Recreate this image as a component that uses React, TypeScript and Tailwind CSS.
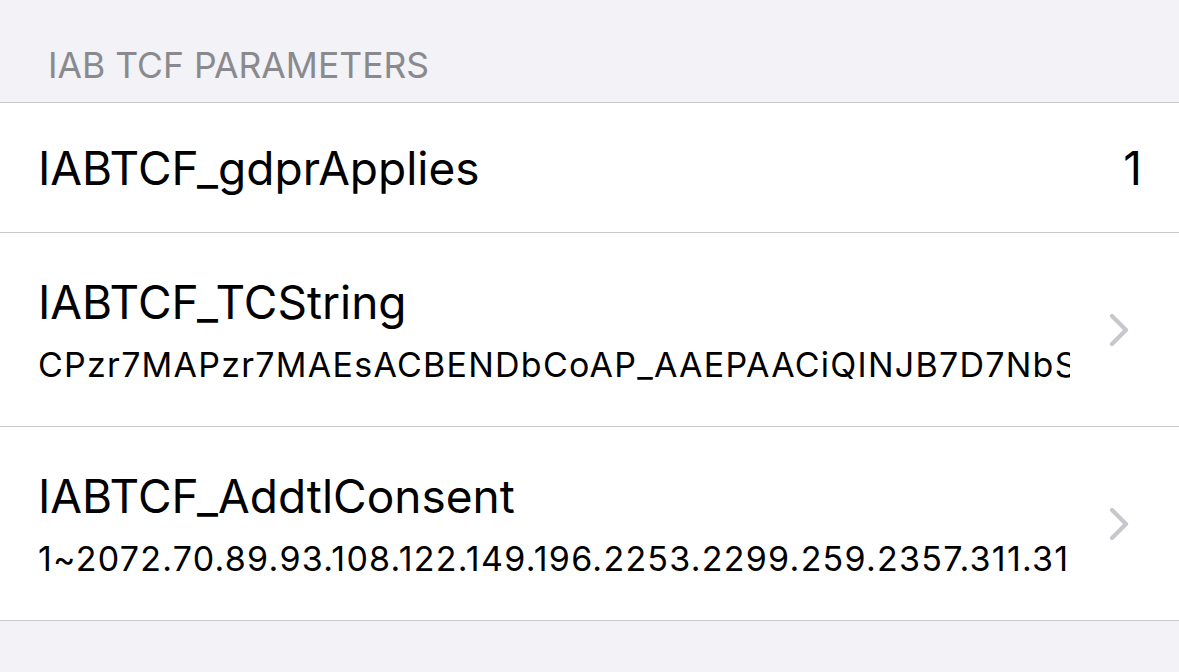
import React from "react";

interface Param {
	key: string;
	value: string;
	detail?: boolean;
}

const params: Param[] = [
	{ key: "IABTCF_gdprApplies", value: "1" },
	{
		key: "IABTCF_TCString",
		value: "CPzr7MAPzr7MAEsACBENDbCoAP_AAEPAACiQINJB7D7NbSFyWfZhF90_aNEHI1XNqw3rZvjdYSVGpz2lBLbwLmjgf8uWW9",
		detail: true,
	},
	{
		key: "IABTCF_AddtlConsent",
		value: "1~2072.70.89.93.108.122.149.196.2253.2299.259.2357.311.317.323.2373.338.358.415.440.449",
		detail: true,
	},
];

function Chevron() {
	return (
		<svg width="20" height="32" viewBox="0 0 20 32" className="shrink-0">
			<path d="M3 2 L17 16 L3 30" fill="none" stroke="#c7c7cc" strokeWidth="4.2" strokeLinecap="round" strokeLinejoin="round" />
		</svg>
	);
}

export default function App() {
	return (
		<div className="w-[1179px] h-[672px] bg-[#f2f2f7] font-['Inter','Liberation_Sans',sans-serif] overflow-hidden">
			{/* section header */}
			<div className="h-[102px] flex items-end pl-[48px] pb-[19px]">
				<span className="text-[35.5px] leading-none text-[#8a8a8e]">IAB TCF PARAMETERS</span>
			</div>

			<div className="bg-white border-t border-b border-[#c8c7cc]">
				{params.map((p, i) =>
					p.detail ? (
						<div
							key={p.key}
							className={`flex items-center pl-[38px] pr-[50px] ${i < params.length - 1 ? "h-[194px] border-b border-[#c8c7cc]" : "h-[193px]"}`}
						>
							<div className="w-[1032px] shrink-0">
								<div className="text-[46px] leading-[1.1] text-black whitespace-nowrap">{p.key}</div>
								<div className="mt-[20px] w-full text-[34px] leading-none tracking-[1.25px] text-black whitespace-nowrap overflow-hidden">{p.value}</div>
							</div>
							<div className="flex-1" />
							<Chevron />
						</div>
					) : (
						<div key={p.key} className="h-[130px] flex items-center justify-between pl-[38px] pr-[37px] border-b border-[#c8c7cc]">
							<span className="text-[46px] leading-none text-black">{p.key}</span>
							<span className="text-[46px] leading-none text-black">{p.value}</span>
						</div>
					)
				)}
			</div>
		</div>
	);
}
